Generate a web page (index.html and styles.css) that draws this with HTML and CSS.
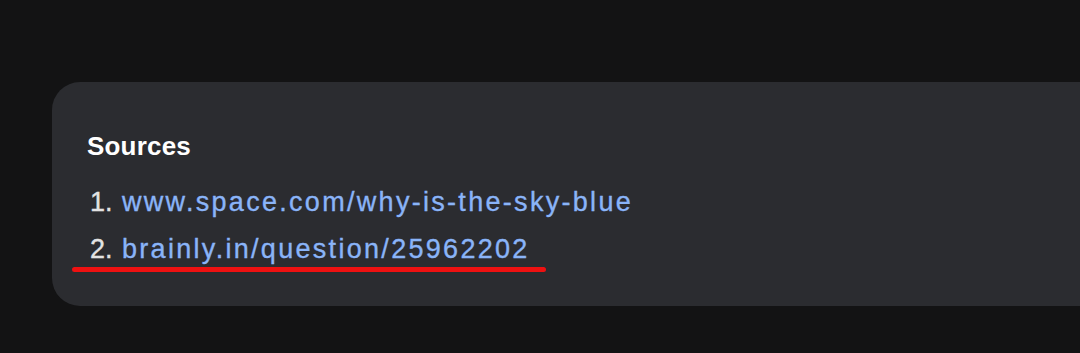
FILE: index.html
```html
<!DOCTYPE html>
<html>
<head>
<meta charset="utf-8">
<link rel="stylesheet" href="styles.css">
</head>
<body>
<div class="page">
  <section class="card">
    <h2 class="title">Sources</h2>
    <ol class="sources">
      <li><span class="num">1.</span><a class="link" href="#">www.space.com/why-is-the-sky-blue</a></li>
      <li class="marked"><span class="num">2.</span><a class="link" href="#">brainly.in/question/25962202</a><span class="mark"></span></li>
    </ol>
  </section>
</div>
</body>
</html>
```
FILE: styles.css
```css
html, body {
  margin: 0;
  padding: 0;
  background: #131314;
  overflow: hidden;
}
.page {
  width: 1080px;
  height: 353px;
  padding: 82px 0 0 52px;
  box-sizing: border-box;
  overflow: hidden;
}
.card {
  width: 1100px;
  height: 224px;
  box-sizing: border-box;
  background: #2b2c30;
  border-radius: 28px;
  padding: 50px 0 0 35px;
  font-family: "Liberation Sans", Arial, sans-serif;
}
.title {
  margin: 0;
  font-size: 26px;
  font-weight: bold;
  color: #ffffff;
  line-height: 28px;
  letter-spacing: 0.2px;
}
.sources {
  list-style: none;
  margin: 19px 0 0 0;
  padding: 0;
}
.sources li {
  position: relative;
  display: flex;
  font-size: 27px;
  line-height: 47px;
  height: 47px;
  -webkit-text-stroke: 0.35px currentColor;
}
.num {
  color: #e3e3e3;
  margin-left: 3px;
  width: 32px;
}
.link {
  color: #8ab4f8;
  text-decoration: none;
  letter-spacing: 2.3px;
}
.mark {
  position: absolute;
  left: -15px;
  top: 41px;
  width: 474px;
  height: 5px;
  background: #ee1111;
  border-radius: 3px;
}
```
